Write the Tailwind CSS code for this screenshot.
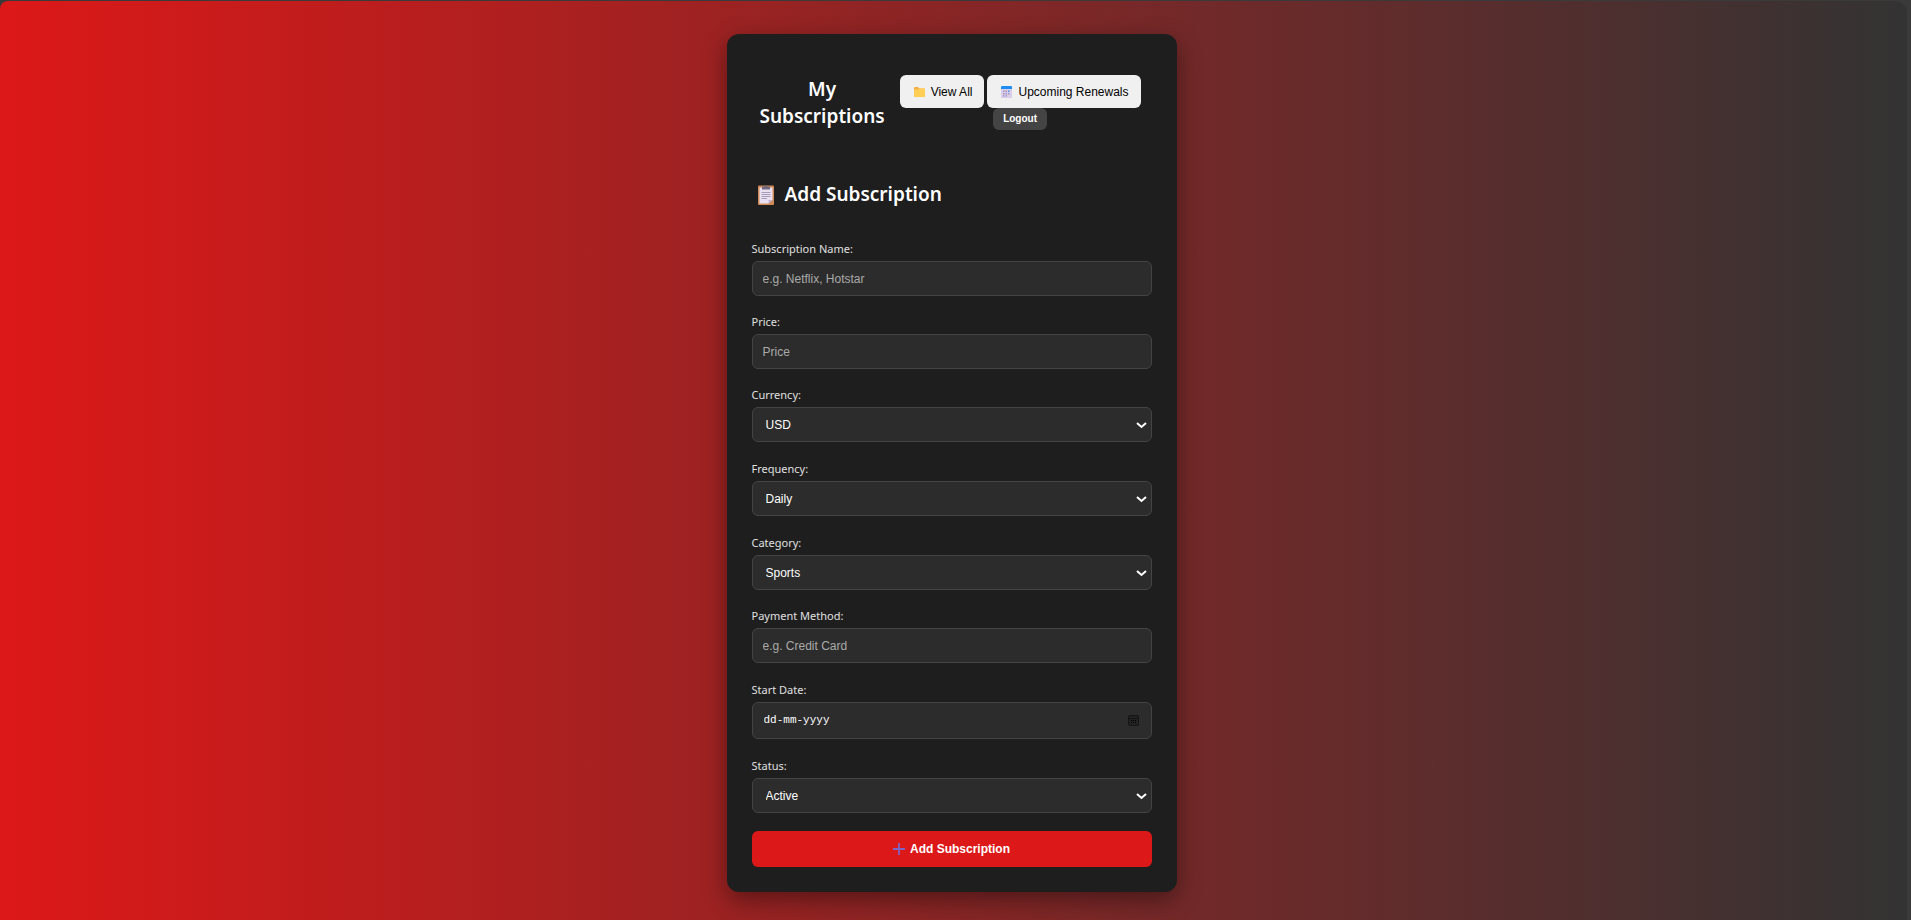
<!DOCTYPE html>
<html lang="en">
<head>
<meta charset="utf-8">
<meta name="viewport" content="width=device-width, initial-scale=1">
<title>My Subscriptions</title>
<script src="https://cdn.jsdelivr.net/npm/@tailwindcss/browser@4"></script>
</head>
<body class="min-h-screen bg-[#3a3a3a] pt-px pr-1 font-['Liberation_Sans',sans-serif] text-xs text-white">
<div class="flex min-h-[calc(100vh-1px)] items-start justify-center rounded-tl-lg rounded-tr-xl bg-linear-to-r/srgb from-[#dd1818] to-[#333333] pt-[33px] pr-5 pb-7 pl-4">
  <main class="w-full max-w-[450px] rounded-xl bg-[#1e1e1e] p-[25px] shadow-[0_8px_24px_rgba(0,0,0,0.4)]">
    <header class="flex items-center justify-between gap-3 px-2 pt-4">
      <h1 class="w-min text-center font-['Noto_Sans',sans-serif] text-[19px] leading-[27px] font-semibold">My Subscriptions</h1>
      <nav class="flex flex-1 flex-wrap justify-center gap-x-[3px]" aria-label="Subscriptions">
        <button type="button" class="flex h-[33px] items-center gap-1.5 rounded-md bg-[#f0f0f0] pr-3 pl-3.5 whitespace-nowrap text-black">
          <svg class="h-[10px] w-[11px]" viewBox="0 0 11 10" aria-hidden="true"><path d="M0 1Q0 0 1 0h3l1.500 1.500H10q1 0 1 1V9q0 1-1 1H1Q0 10 0 9z" fill="#f2b04a"/><path d="M0 3.500q0-1 1-1h3.500L6 1.500h4q1 0 1 1V9q0 1-1 1H1Q0 10 0 9z" fill="#ffce55"/></svg>
          View All</button>
        <button type="button" class="flex h-[33px] items-center gap-1.5 rounded-md bg-[#f0f0f0] pr-3 pl-3.5 whitespace-nowrap text-black">
          <svg class="h-[12px] w-[11px]" viewBox="0 0 11 12" aria-hidden="true"><path d="M0 2h11v9q0 1-1 1H1q-1 0-1-1z" fill="#d9cdea"/><path d="M0 3V1q0-1 1-1h9q1 0 1 1v2z" fill="#1e8df2"/><path d="M2 4.500h1.500V6H2zM4.500 4.500H6V6H4.500zM2 7h1.500v1.500H2zM4.500 7H6v1.500H4.500zM7 7h1.500v1.500H7zM2 9.300h1.500v1.200H2zM4.500 9.300H6v1.200H4.500z" fill="#a295bd"/><path d="M7 4.500h1.500V6H7z" fill="#3f95e8"/></svg>
          Upcoming Renewals</button>
        <button type="button" class="h-[22px] rounded-md bg-[#444] px-2.5 text-[10px] font-bold">Logout</button>
      </nav>
    </header>

    <h2 class="mt-[51px] flex items-center gap-[11px] px-1.5 font-['Noto_Sans',sans-serif] text-[19px] leading-[27px] font-semibold">
      <svg class="h-[20px] w-[16px]" viewBox="0 0 16 20" aria-hidden="true"><rect y=".5" width="16" height="19.500" rx="1" fill="#d08a58"/><path d="M1.500 2.500h13V15l-4 3.500h-9z" fill="#e9e0f2"/><path d="M10.500 18.500V15h4z" fill="#bdaed0"/><path d="M4 1.500h2.500Q7 0 8 0t1.500 1.500H12v3H4z" fill="#71687c"/><path d="M3.500 7.500h9M3.500 9.500h9M3.500 11.500h9M3.500 13.500h5.500" stroke="#a79bb8"/></svg>
      Add Subscription</h2>

    <form class="mt-[33px] flex flex-col gap-[18px]">
      <div>
        <label for="name" class="mb-1 block font-['Noto_Sans',sans-serif] text-[11px] leading-4 text-[#e0e0e0]">Subscription Name:</label>
        <input id="name" type="text" placeholder="e.g. Netflix, Hotstar" class="block h-[35px] w-full rounded-md border border-[#444] bg-[#2c2c2c] px-2.5 placeholder:text-[#aaa]">
      </div>
      <div>
        <label for="price" class="mb-1 block font-['Noto_Sans',sans-serif] text-[11px] leading-4 text-[#e0e0e0]">Price:</label>
        <input id="price" type="text" inputmode="decimal" placeholder="Price" class="block h-[35px] w-full rounded-md border border-[#444] bg-[#2c2c2c] px-2.5 placeholder:text-[#aaa]">
      </div>
      <div class="pb-px">
        <label for="currency" class="mb-1 block font-['Noto_Sans',sans-serif] text-[11px] leading-4 text-[#e0e0e0]">Currency:</label>
        <div class="relative">
          <select id="currency" class="block h-[35px] w-full appearance-none rounded-md border border-[#444] bg-[#2c2c2c] px-[13px]"><option>USD</option></select>
          <svg class="pointer-events-none absolute inset-y-0 right-1 my-auto h-2 w-3" viewBox="0 0 12 8" aria-hidden="true"><path d="M1 2l4.500 4L10 2" fill="none" stroke="#fff" stroke-width="2"/></svg>
        </div>
      </div>
      <div class="pb-px">
        <label for="frequency" class="mb-1 block font-['Noto_Sans',sans-serif] text-[11px] leading-4 text-[#e0e0e0]">Frequency:</label>
        <div class="relative">
          <select id="frequency" class="block h-[35px] w-full appearance-none rounded-md border border-[#444] bg-[#2c2c2c] px-[13px]"><option>Daily</option></select>
          <svg class="pointer-events-none absolute inset-y-0 right-1 my-auto h-2 w-3" viewBox="0 0 12 8" aria-hidden="true"><path d="M1 2l4.500 4L10 2" fill="none" stroke="#fff" stroke-width="2"/></svg>
        </div>
      </div>
      <div>
        <label for="category" class="mb-1 block font-['Noto_Sans',sans-serif] text-[11px] leading-4 text-[#e0e0e0]">Category:</label>
        <div class="relative">
          <select id="category" class="block h-[35px] w-full appearance-none rounded-md border border-[#444] bg-[#2c2c2c] px-[13px]"><option>Sports</option></select>
          <svg class="pointer-events-none absolute inset-y-0 right-1 my-auto h-2 w-3" viewBox="0 0 12 8" aria-hidden="true"><path d="M1 2l4.500 4L10 2" fill="none" stroke="#fff" stroke-width="2"/></svg>
        </div>
      </div>
      <div class="pb-px">
        <label for="payment" class="mb-1 block font-['Noto_Sans',sans-serif] text-[11px] leading-4 text-[#e0e0e0]">Payment Method:</label>
        <input id="payment" type="text" placeholder="e.g. Credit Card" class="block h-[35px] w-full rounded-md border border-[#444] bg-[#2c2c2c] px-2.5 placeholder:text-[#aaa]">
      </div>
      <div class="pb-px">
        <label for="start" class="mb-1 block font-['Noto_Sans',sans-serif] text-[11px] leading-4 text-[#e0e0e0]">Start Date:</label>
        <div class="flex h-[37px] items-center rounded-md border border-[#444] bg-[#2c2c2c] pr-3 pl-[11px]">
          <input id="start" type="text" placeholder="dd-mm-yyyy" class="min-w-0 flex-1 font-['Liberation_Mono',monospace] text-[11px] placeholder:text-white">
          <button type="button" aria-label="Open calendar">
            <svg class="h-[11px] w-[11px]" viewBox="0 0 11 11" aria-hidden="true"><rect x=".5" y=".5" width="10" height="10" rx="1.500" fill="#222" stroke="#151515"/><path d="M1 3.500h9" stroke="#151515"/><path d="M5 5h1v1H5zM7 5h1v1H7zM3 7h1v1H3zM5 7h1v1H5zM7 7h1v1H7zM3 5h1v1H3z" fill="#000"/></svg>
          </button>
        </div>
      </div>
      <div>
        <label for="status" class="mb-1 block font-['Noto_Sans',sans-serif] text-[11px] leading-4 text-[#e0e0e0]">Status:</label>
        <div class="relative">
          <select id="status" class="block h-[35px] w-full appearance-none rounded-md border border-[#444] bg-[#2c2c2c] px-[13px]"><option>Active</option></select>
          <svg class="pointer-events-none absolute inset-y-0 right-1 my-auto h-2 w-3" viewBox="0 0 12 8" aria-hidden="true"><path d="M1 2l4.500 4L10 2" fill="none" stroke="#fff" stroke-width="2"/></svg>
        </div>
      </div>
      <button type="submit" class="flex h-[36px] w-full items-center justify-center gap-[5px] rounded-md bg-[#dd1818] font-bold">
        <svg class="h-[12px] w-[12px]" viewBox="0 0 12 12" aria-hidden="true"><path d="M6 0v12M0 6h12" stroke="#8064c4" stroke-width="1.800"/></svg>
        Add Subscription</button>
    </form>
  </main>
</div>
</body>
</html>
